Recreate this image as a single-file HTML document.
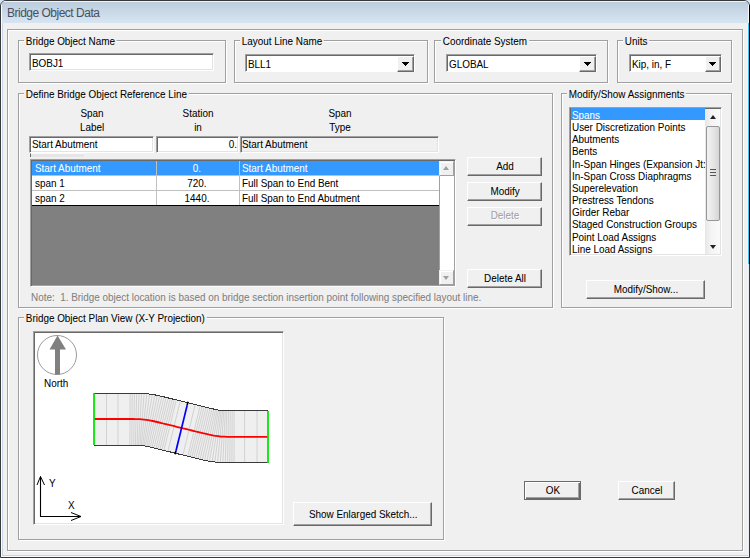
<!DOCTYPE html>
<html><head><meta charset="utf-8">
<style>
*{margin:0;padding:0;box-sizing:border-box}
html,body{width:750px;height:558px;overflow:hidden;background:#d6e6f3}
body{position:relative;font-family:"Liberation Sans",sans-serif;font-size:11px;color:#000}
div,span,svg{position:absolute}
.t{white-space:nowrap;line-height:13px;transform:scaleX(0.9);transform-origin:0 0;-webkit-text-stroke:0.05px currentColor}
.c{text-align:center;transform-origin:50% 0}
.r{text-align:right;transform-origin:100% 0}
.grp{border:1px solid #a0a0a0;box-shadow:inset 1px 1px 0 #fff,1px 1px 0 #fff}
.lbl{background:#f0f0f0;padding:0 2px 0 2px;white-space:nowrap;line-height:13px;transform:scaleX(0.9);transform-origin:0 0;-webkit-text-stroke:0.05px currentColor}
.edit{background:#fff;border:1px solid;border-color:#a0a0a0 #fff #fff #a0a0a0;box-shadow:inset 1px 1px 0 #696969,inset -1px -1px 0 #e3e3e3}
.combo{background:#fff;border:1px solid;border-color:#a0a0a0 #fff #fff #a0a0a0;box-shadow:inset 1px 1px 0 #696969}
.btn{background:#f0f0f0;border:1px solid;border-color:#fff #696969 #696969 #fff;box-shadow:inset -1px -1px 0 #a0a0a0}
.btnd{background:#f0f0f0;border:1px solid #696969;box-shadow:inset 1px 1px 0 #fff,inset -1px -1px 0 #696969,inset -2px -2px 0 #a0a0a0}
.dd{background:#f0f0f0;border:1px solid;border-color:#fff #696969 #696969 #fff;box-shadow:inset -1px -1px 0 #a0a0a0}
.arr{width:0;height:0;border-left:3.5px solid transparent;border-right:3.5px solid transparent;border-top:4px solid #000}
</style></head><body>
<div style="left:0;top:0;width:750px;height:558px;border:1px solid #383838;border-radius:6px 6px 0 0;background:#f0f0f0"></div>
<div style="left:1px;top:1px;width:748px;height:22px;border-radius:5px 5px 0 0;background:linear-gradient(#eef3f8 0,#eef3f8 1px,#bccddd 1px,#d7e5f2 100%)"></div>
<div style="left:1px;top:5px;width:1px;height:552px;background:#fff"></div>
<div style="left:2px;top:23px;width:1px;height:533px;background:#c4d6e8"></div>
<div style="left:748px;top:5px;width:1px;height:18px;background:#f4f8fc"></div>
<div style="left:748px;top:23px;width:1px;height:241px;background:#3cc4f0"></div>
<div style="left:748px;top:264px;width:1px;height:293px;background:#e4eef8"></div>
<div style="left:749px;top:5px;width:1px;height:259px;background:#000"></div>
<div style="left:747px;top:23px;width:1px;height:533px;background:#f6f0f0"></div>
<div style="left:2px;top:555px;width:746px;height:1px;background:#c4d6e8"></div>
<div style="left:2px;top:556px;width:746px;height:1px;background:#f8fbff"></div>
<span style="left:7px;top:6px;font-size:12px;line-height:15px;color:#4a4e5e;letter-spacing:-0.5px;white-space:nowrap">Bridge Object Data</span>
<div class="grp" style="left:7px;top:29px;width:736px;height:522px"></div>
<div class="grp" style="left:18px;top:40px;width:208px;height:43px"></div>
<span class="lbl" style="left:24px;top:35px">Bridge Object Name</span>
<div class="edit" style="left:29px;top:53px;width:185px;height:18px;background:#fff"></div>
<span class="t" style="left:32px;top:57px;">BOBJ1</span>
<div class="grp" style="left:234px;top:40px;width:194px;height:43px"></div>
<span class="lbl" style="left:240px;top:35px">Layout Line Name</span>
<div class="combo" style="left:245px;top:54px;width:170px;height:18px"></div>
<span class="t" style="left:248px;top:58px;">BLL1</span>
<div class="dd" style="left:397px;top:56px;width:17px;height:16px"></div>
<svg style="left:402px;top:62px" width="7" height="4" shape-rendering="crispEdges"><rect x="0" y="0" width="7" height="1"/><rect x="1" y="1" width="5" height="1"/><rect x="2" y="2" width="3" height="1"/><rect x="3" y="3" width="1" height="1"/></svg>
<div class="grp" style="left:434px;top:40px;width:174px;height:43px"></div>
<span class="lbl" style="left:441px;top:35px">Coordinate System</span>
<div class="combo" style="left:446px;top:54px;width:151px;height:18px"></div>
<span class="t" style="left:449px;top:58px;">GLOBAL</span>
<div class="dd" style="left:579px;top:56px;width:17px;height:16px"></div>
<svg style="left:584px;top:62px" width="7" height="4" shape-rendering="crispEdges"><rect x="0" y="0" width="7" height="1"/><rect x="1" y="1" width="5" height="1"/><rect x="2" y="2" width="3" height="1"/><rect x="3" y="3" width="1" height="1"/></svg>
<div class="grp" style="left:617px;top:40px;width:115px;height:43px"></div>
<span class="lbl" style="left:623px;top:35px">Units</span>
<div class="combo" style="left:629px;top:54px;width:93px;height:18px"></div>
<span class="t" style="left:632px;top:58px;">Kip, in, F</span>
<div class="dd" style="left:705px;top:56px;width:16px;height:16px"></div>
<svg style="left:709px;top:62px" width="7" height="4" shape-rendering="crispEdges"><rect x="0" y="0" width="7" height="1"/><rect x="1" y="1" width="5" height="1"/><rect x="2" y="2" width="3" height="1"/><rect x="3" y="3" width="1" height="1"/></svg>
<div class="grp" style="left:18px;top:93px;width:535px;height:215px"></div>
<span class="lbl" style="left:24px;top:88px">Define Bridge Object Reference Line</span>
<span class="t c" style="left:32.0px;top:107px;width:120px;">Span</span>
<span class="t c" style="left:32.0px;top:121px;width:120px;">Label</span>
<span class="t c" style="left:137.5px;top:107px;width:120px;">Station</span>
<span class="t c" style="left:137.5px;top:121px;width:120px;">in</span>
<span class="t c" style="left:280.0px;top:107px;width:120px;">Span</span>
<span class="t c" style="left:280.0px;top:121px;width:120px;">Type</span>
<div class="edit" style="left:29px;top:136px;width:125px;height:17px;background:#fff"></div>
<span class="t" style="left:32px;top:138px;">Start Abutment</span>
<div class="edit" style="left:156px;top:136px;width:83px;height:17px;background:#fff"></div>
<span class="t r" style="left:117px;top:138px;width:120px;">0.</span>
<div class="edit" style="left:240px;top:136px;width:199px;height:17px;background:#f0f0f0"></div>
<span class="t" style="left:242px;top:138px;">Start Abutment</span>
<div style="left:30px;top:159px;width:426px;height:128px;background:#808080;border:1px solid;border-color:#a0a0a0 #fff #fff #a0a0a0;box-shadow:inset 1px 1px 0 #696969,inset -1px -1px 0 #a0a0a0"></div>
<div style="left:30px;top:153px;width:54px;height:4px;background:#e6e6e6;border-top:1px solid #fafafa;border-left:1px solid #666"></div>
<div style="left:32px;top:161px;width:407px;height:44px;background:#fff"></div>
<div style="left:32px;top:161px;width:407px;height:14px;background:#3399ff"></div>
<div style="left:32px;top:175px;width:407px;height:1px;background:#c0c0c0"></div>
<div style="left:32px;top:190px;width:407px;height:1px;background:#c0c0c0"></div>
<div style="left:32px;top:205px;width:407px;height:1px;background:#000"></div>
<div style="left:156px;top:161px;width:1px;height:44px;background:#c0c0c0"></div>
<div style="left:239px;top:161px;width:1px;height:44px;background:#c0c0c0"></div>
<span class="t" style="left:35px;top:162px;color:#fff">Start Abutment</span>
<span class="t c" style="left:137.0px;top:162px;width:120px;color:#fff">0.</span>
<span class="t" style="left:242px;top:162px;color:#fff">Start Abutment</span>
<span class="t" style="left:35px;top:177px;">span 1</span>
<span class="t c" style="left:137.0px;top:177px;width:120px;">720.</span>
<span class="t" style="left:242px;top:177px;">Full Span to End Bent</span>
<span class="t" style="left:35px;top:192px;">span 2</span>
<span class="t c" style="left:137.0px;top:192px;width:120px;">1440.</span>
<span class="t" style="left:242px;top:192px;">Full Span to End Abutment</span>
<div style="left:439px;top:161px;width:15px;height:124px;background:#fff;border-left:1px solid #a0a0a0"></div>
<div class="dd" style="left:439px;top:161px;width:15px;height:15px;border-color:#f0f0f0 #a0a0a0 #a0a0a0 #f0f0f0;box-shadow:inset 1px 1px 0 #fff"></div>
<div class="arr" style="left:443px;top:166px;border-top:0;border-bottom:4px solid #a0a0a0"></div>
<div class="dd" style="left:439px;top:270px;width:15px;height:15px;border-color:#f0f0f0 #a0a0a0 #a0a0a0 #f0f0f0;box-shadow:inset 1px 1px 0 #fff"></div>
<div class="arr" style="left:443px;top:276px;border-top-color:#a0a0a0"></div>
<div class="btn" style="left:467px;top:157px;width:75px;height:19px"></div>
<span class="t c" style="left:444.5px;top:160px;width:120px;">Add</span>
<div class="btn" style="left:467px;top:182px;width:75px;height:19px"></div>
<span class="t c" style="left:444.5px;top:185px;width:120px;">Modify</span>
<div class="btn" style="left:467px;top:207px;width:75px;height:19px"></div>
<span class="t c" style="left:444.5px;top:209px;width:120px;color:#a0a0a0;text-shadow:1px 1px 0 #fff">Delete</span>
<div class="btn" style="left:467px;top:269px;width:75px;height:19px"></div>
<span class="t c" style="left:444.5px;top:272px;width:120px;">Delete All</span>
<span class="t" style="left:31px;top:291px;color:#808080">Note:&nbsp; 1. Bridge object location is based on bridge section insertion point following specified layout line.</span>
<div class="grp" style="left:561px;top:93px;width:171px;height:215px"></div>
<span class="lbl" style="left:567px;top:88px">Modify/Show Assignments</span>
<div class="edit" style="left:569px;top:107px;width:153px;height:149px;background:#fff"></div>
<div style="left:571px;top:108px;width:134px;height:12px;background:#3399ff"></div>
<span class="t" style="left:572px;top:109px;color:#fff">Spans</span>
<span class="t" style="left:572px;top:121px;">User Discretization Points</span>
<span class="t" style="left:572px;top:133px;">Abutments</span>
<span class="t" style="left:572px;top:145px;">Bents</span>
<span class="t" style="left:572px;top:158px;">In-Span Hinges (Expansion Jt:</span>
<span class="t" style="left:572px;top:170px;">In-Span Cross Diaphragms</span>
<span class="t" style="left:572px;top:182px;">Superelevation</span>
<span class="t" style="left:572px;top:194px;">Prestress Tendons</span>
<span class="t" style="left:572px;top:206px;">Girder Rebar</span>
<span class="t" style="left:572px;top:218px;">Staged Construction Groups</span>
<span class="t" style="left:572px;top:231px;">Point Load Assigns</span>
<span class="t" style="left:572px;top:243px;">Line Load Assigns</span>
<div style="left:705px;top:109px;width:15px;height:145px;background:linear-gradient(90deg,#e6e6e6,#f4f4f4 40%,#fafafa)"></div>
<div style="left:706px;top:126px;width:14px;height:95px;border:1px solid #979797;border-radius:2px;background:linear-gradient(90deg,#f2f2f2,#e6e6e6 50%,#d6d6d6)"></div>
<div style="left:710px;top:169px;width:6px;height:7px;border-top:1px solid #555;border-bottom:1px solid #555"></div>
<div style="left:710px;top:172px;width:6px;height:1px;background:#555"></div>
<div class="arr" style="left:709.5px;top:115px;border-top:0;border-bottom:4px solid #222"></div>
<div class="arr" style="left:709.5px;top:245px;border-top-color:#222"></div>
<div class="btn" style="left:586px;top:280px;width:119px;height:19px"></div>
<span class="t c" style="left:585.5px;top:283px;width:120px;">Modify/Show...</span>
<div class="grp" style="left:18px;top:317px;width:426px;height:223px"></div>
<span class="lbl" style="left:24px;top:312px">Bridge Object Plan View (X-Y Projection)</span>
<div class="edit" style="left:33px;top:331px;width:251px;height:194px;background:#fff"></div>
<svg style="left:0;top:0" width="750" height="558" viewBox="0 0 750 558">
<polygon points="94.0,393.0 96.2,393.0 98.4,393.0 100.5,393.0 102.7,393.0 104.9,393.0 107.1,393.0 109.2,393.0 111.4,393.0 113.6,393.0 115.8,393.0 117.9,393.0 120.1,393.0 122.3,393.0 124.5,393.0 126.7,393.0 128.9,393.0 131.1,393.0 133.5,393.0 135.9,393.1 138.4,393.1 141.1,393.3 144.0,393.4 146.9,393.7 149.8,394.1 152.7,394.5 155.5,395.0 158.2,395.6 160.7,396.1 163.1,396.7 165.4,397.2 167.6,397.8 169.8,398.3 172.0,398.9 174.2,399.4 176.4,399.9 178.5,400.5 180.7,401.0 182.9,401.5 185.1,402.1 187.2,402.6 189.4,403.1 191.6,403.7 193.8,404.2 195.9,404.7 198.1,405.3 200.3,405.8 202.5,406.3 204.6,406.9 206.8,407.4 208.9,407.9 211.0,408.4 213.0,408.9 214.9,409.3 216.7,409.7 218.3,410.0 219.8,410.2 221.2,410.4 222.6,410.6 224.1,410.7 225.7,410.8 227.4,410.8 229.3,410.9 231.3,410.9 233.4,410.9 235.5,410.9 237.6,410.9 239.8,410.9 242.0,410.9 244.2,410.9 246.3,410.9 248.5,410.9 250.7,410.9 252.9,410.9 255.0,410.9 257.2,410.9 259.4,410.9 261.6,410.9 263.7,410.9 265.9,410.9 268.0,410.9 268.0,462.9 265.8,462.9 263.6,462.9 261.5,462.9 259.3,462.9 257.1,462.9 254.9,462.9 252.8,462.9 250.6,462.9 248.4,462.9 246.2,462.9 244.1,462.9 241.9,462.9 239.7,462.9 237.5,462.9 235.3,462.9 233.1,462.9 230.8,462.9 228.4,462.9 226.0,462.8 223.4,462.7 220.6,462.6 217.7,462.3 214.8,462.0 211.8,461.6 209.0,461.1 206.3,460.6 203.7,460.1 201.2,459.5 198.9,459.0 196.6,458.4 194.4,457.9 192.2,457.3 190.0,456.8 187.8,456.3 185.6,455.7 183.5,455.2 181.3,454.7 179.1,454.1 176.9,453.6 174.8,453.1 172.6,452.5 170.4,452.0 168.2,451.5 166.1,450.9 163.9,450.4 161.7,449.9 159.5,449.3 157.4,448.8 155.2,448.3 153.1,447.8 151.1,447.3 149.1,446.8 147.3,446.4 145.6,446.1 144.0,445.8 142.6,445.6 141.2,445.4 139.7,445.3 138.2,445.2 136.5,445.1 134.7,445.1 132.8,445.0 130.8,445.0 128.7,445.0 126.5,445.0 124.4,445.0 122.2,445.0 120.0,445.0 117.8,445.0 115.7,445.0 113.5,445.0 111.3,445.0 109.1,445.0 107.0,445.0 104.8,445.0 102.6,445.0 100.4,445.0 98.3,445.0 96.1,445.0 94.0,445.0" fill="#efefef"/>
<line x1="106.5" y1="393.0" x2="106.5" y2="445.0" stroke="#d2d2d2" stroke-width="1"/>
<line x1="118.0" y1="393.0" x2="118.0" y2="445.0" stroke="#d2d2d2" stroke-width="1"/>
<line x1="130.1" y1="393.0" x2="129.9" y2="445.0" stroke="#d2d2d2" stroke-width="1"/>
<line x1="132.2" y1="393.0" x2="131.8" y2="445.0" stroke="#d2d2d2" stroke-width="1"/>
<line x1="134.4" y1="393.0" x2="133.7" y2="445.0" stroke="#d2d2d2" stroke-width="1"/>
<line x1="136.7" y1="393.1" x2="135.4" y2="445.1" stroke="#d2d2d2" stroke-width="1"/>
<line x1="139.1" y1="393.2" x2="137.0" y2="445.1" stroke="#d2d2d2" stroke-width="1"/>
<line x1="141.6" y1="393.3" x2="138.5" y2="445.2" stroke="#d2d2d2" stroke-width="1"/>
<line x1="144.2" y1="393.5" x2="139.9" y2="445.3" stroke="#d2d2d2" stroke-width="1"/>
<line x1="146.9" y1="393.7" x2="141.2" y2="445.4" stroke="#d2d2d2" stroke-width="1"/>
<line x1="149.6" y1="394.1" x2="142.5" y2="445.6" stroke="#d2d2d2" stroke-width="1"/>
<line x1="152.3" y1="394.5" x2="143.8" y2="445.8" stroke="#d2d2d2" stroke-width="1"/>
<line x1="154.9" y1="394.9" x2="145.3" y2="446.0" stroke="#d2d2d2" stroke-width="1"/>
<line x1="157.3" y1="395.4" x2="146.8" y2="446.3" stroke="#d2d2d2" stroke-width="1"/>
<line x1="159.7" y1="395.9" x2="148.4" y2="446.7" stroke="#d2d2d2" stroke-width="1"/>
<line x1="161.9" y1="396.4" x2="150.2" y2="447.1" stroke="#d2d2d2" stroke-width="1"/>
<line x1="164.1" y1="396.9" x2="152.0" y2="447.5" stroke="#d2d2d2" stroke-width="1"/>
<line x1="166.2" y1="397.4" x2="154.0" y2="448.0" stroke="#d2d2d2" stroke-width="1"/>
<line x1="168.2" y1="397.9" x2="155.9" y2="448.4" stroke="#d2d2d2" stroke-width="1"/>
<line x1="170.3" y1="398.4" x2="157.9" y2="448.9" stroke="#d2d2d2" stroke-width="1"/>
<line x1="172.3" y1="398.9" x2="159.9" y2="449.4" stroke="#d2d2d2" stroke-width="1"/>
<line x1="174.3" y1="399.4" x2="161.9" y2="449.9" stroke="#d2d2d2" stroke-width="1"/>
<line x1="176.3" y1="399.9" x2="163.9" y2="450.4" stroke="#d2d2d2" stroke-width="1"/>
<line x1="180.3" y1="400.9" x2="167.9" y2="451.4" stroke="#d2d2d2" stroke-width="1"/>
<line x1="195.2" y1="404.5" x2="182.9" y2="455.1" stroke="#d2d2d2" stroke-width="1"/>
<line x1="200.2" y1="405.8" x2="187.8" y2="456.3" stroke="#d2d2d2" stroke-width="1"/>
<line x1="202.2" y1="406.3" x2="189.8" y2="456.8" stroke="#d2d2d2" stroke-width="1"/>
<line x1="204.2" y1="406.7" x2="191.8" y2="457.3" stroke="#d2d2d2" stroke-width="1"/>
<line x1="206.2" y1="407.2" x2="193.8" y2="457.7" stroke="#d2d2d2" stroke-width="1"/>
<line x1="208.2" y1="407.7" x2="195.9" y2="458.2" stroke="#d2d2d2" stroke-width="1"/>
<line x1="210.1" y1="408.2" x2="198.0" y2="458.7" stroke="#d2d2d2" stroke-width="1"/>
<line x1="212.0" y1="408.6" x2="200.1" y2="459.2" stroke="#d2d2d2" stroke-width="1"/>
<line x1="213.8" y1="409.0" x2="202.3" y2="459.8" stroke="#d2d2d2" stroke-width="1"/>
<line x1="215.5" y1="409.4" x2="204.6" y2="460.3" stroke="#d2d2d2" stroke-width="1"/>
<line x1="217.1" y1="409.7" x2="207.0" y2="460.8" stroke="#d2d2d2" stroke-width="1"/>
<line x1="218.5" y1="410.0" x2="209.5" y2="461.2" stroke="#d2d2d2" stroke-width="1"/>
<line x1="219.9" y1="410.2" x2="212.2" y2="461.7" stroke="#d2d2d2" stroke-width="1"/>
<line x1="221.2" y1="410.4" x2="214.9" y2="462.0" stroke="#d2d2d2" stroke-width="1"/>
<line x1="222.5" y1="410.6" x2="217.6" y2="462.3" stroke="#d2d2d2" stroke-width="1"/>
<line x1="223.8" y1="410.7" x2="220.3" y2="462.5" stroke="#d2d2d2" stroke-width="1"/>
<line x1="225.3" y1="410.7" x2="222.8" y2="462.7" stroke="#d2d2d2" stroke-width="1"/>
<line x1="226.8" y1="410.8" x2="225.3" y2="462.8" stroke="#d2d2d2" stroke-width="1"/>
<line x1="228.5" y1="410.9" x2="227.6" y2="462.8" stroke="#d2d2d2" stroke-width="1"/>
<line x1="230.3" y1="410.9" x2="229.8" y2="462.9" stroke="#d2d2d2" stroke-width="1"/>
<line x1="232.2" y1="410.9" x2="231.9" y2="462.9" stroke="#d2d2d2" stroke-width="1"/>
<line x1="234.1" y1="410.9" x2="234.0" y2="462.9" stroke="#d2d2d2" stroke-width="1"/>
<line x1="244.6" y1="410.9" x2="244.6" y2="462.9" stroke="#d2d2d2" stroke-width="1"/>
<line x1="257.0" y1="410.9" x2="257.0" y2="462.9" stroke="#d2d2d2" stroke-width="1"/>
<polyline points="94.0,393.0 96.2,393.0 98.4,393.0 100.5,393.0 102.7,393.0 104.9,393.0 107.1,393.0 109.2,393.0 111.4,393.0 113.6,393.0 115.8,393.0 117.9,393.0 120.1,393.0 122.3,393.0 124.5,393.0 126.7,393.0 128.9,393.0 131.1,393.0 133.5,393.0 135.9,393.1 138.4,393.1 141.1,393.3 144.0,393.4 146.9,393.7 149.8,394.1 152.7,394.5 155.5,395.0 158.2,395.6 160.7,396.1 163.1,396.7 165.4,397.2 167.6,397.8 169.8,398.3 172.0,398.9 174.2,399.4 176.4,399.9 178.5,400.5 180.7,401.0 182.9,401.5 185.1,402.1 187.2,402.6 189.4,403.1 191.6,403.7 193.8,404.2 195.9,404.7 198.1,405.3 200.3,405.8 202.5,406.3 204.6,406.9 206.8,407.4 208.9,407.9 211.0,408.4 213.0,408.9 214.9,409.3 216.7,409.7 218.3,410.0 219.8,410.2 221.2,410.4 222.6,410.6 224.1,410.7 225.7,410.8 227.4,410.8 229.3,410.9 231.3,410.9 233.4,410.9 235.5,410.9 237.6,410.9 239.8,410.9 242.0,410.9 244.2,410.9 246.3,410.9 248.5,410.9 250.7,410.9 252.9,410.9 255.0,410.9 257.2,410.9 259.4,410.9 261.6,410.9 263.7,410.9 265.9,410.9 268.0,410.9" fill="none" stroke="#3a3a3a" stroke-width="1" shape-rendering="crispEdges"/>
<polyline points="94.0,445.0 96.2,445.0 98.4,445.0 100.5,445.0 102.7,445.0 104.9,445.0 107.1,445.0 109.2,445.0 111.4,445.0 113.6,445.0 115.8,445.0 117.9,445.0 120.1,445.0 122.3,445.0 124.5,445.0 126.6,445.0 128.8,445.0 130.9,445.0 132.9,445.0 134.8,445.1 136.6,445.1 138.3,445.2 139.8,445.3 141.2,445.4 142.6,445.6 144.1,445.8 145.6,446.1 147.3,446.4 149.2,446.8 151.2,447.3 153.2,447.8 155.3,448.3 157.5,448.8 159.6,449.4 161.8,449.9 164.0,450.4 166.1,451.0 168.3,451.5 170.5,452.0 172.7,452.6 174.9,453.1 177.0,453.6 179.2,454.2 181.4,454.7 183.6,455.2 185.7,455.8 187.9,456.3 190.1,456.8 192.3,457.4 194.5,457.9 196.7,458.4 199.0,459.0 201.3,459.5 203.8,460.1 206.4,460.6 209.1,461.2 212.0,461.6 214.9,462.0 217.8,462.3 220.7,462.6 223.5,462.7 226.1,462.8 228.5,462.9 230.9,462.9 233.2,462.9 235.4,462.9 237.6,462.9 239.8,462.9 242.0,462.9 244.2,462.9 246.3,462.9 248.5,462.9 250.7,462.9 252.9,462.9 255.0,462.9 257.2,462.9 259.4,462.9 261.6,462.9 263.7,462.9 265.9,462.9 268.0,462.9" fill="none" stroke="#3a3a3a" stroke-width="1" shape-rendering="crispEdges"/>
<polyline points="94.0,419.0 96.2,419.0 98.4,419.0 100.5,419.0 102.7,419.0 104.9,419.0 107.1,419.0 109.2,419.0 111.4,419.0 113.6,419.0 115.8,419.0 117.9,419.0 120.1,419.0 122.3,419.0 124.5,419.0 126.6,419.0 128.8,419.0 131.0,419.0 133.2,419.0 135.3,419.1 137.5,419.1 139.7,419.2 141.9,419.4 144.1,419.6 146.2,419.8 148.4,420.2 150.6,420.6 152.8,421.0 154.9,421.5 157.1,422.0 159.3,422.5 161.5,423.0 163.6,423.6 165.8,424.1 168.0,424.6 170.2,425.2 172.3,425.7 174.5,426.2 176.7,426.8 178.9,427.3 181.0,427.8 183.2,428.4 185.4,428.9 187.6,429.4 189.7,430.0 191.9,430.5 194.1,431.0 196.3,431.6 198.5,432.1 200.6,432.6 202.8,433.2 205.0,433.7 207.2,434.2 209.3,434.7 211.5,435.1 213.7,435.6 215.9,435.9 218.0,436.2 220.2,436.5 222.4,436.6 224.6,436.7 226.7,436.8 228.9,436.9 231.1,436.9 233.3,436.9 235.4,436.9 237.6,436.9 239.8,436.9 242.0,436.9 244.2,436.9 246.3,436.9 248.5,436.9 250.7,436.9 252.9,436.9 255.0,436.9 257.2,436.9 259.4,436.9 261.6,436.9 263.7,436.9 265.9,436.9 268.0,436.9" fill="none" stroke="#ff0000" stroke-width="1.8"/>
<line x1="94" y1="393.0" x2="94" y2="445.0" stroke="#00e800" stroke-width="1.8"/>
<line x1="268" y1="410.9" x2="268" y2="462.9" stroke="#00e800" stroke-width="1.8"/>
<line x1="188.0" y1="401.7" x2="187.2" y2="405.1" stroke="#000" stroke-width="1.6"/>
<line x1="175.1" y1="454.2" x2="176.0" y2="450.8" stroke="#000" stroke-width="1.6"/>
<line x1="187.2" y1="405.1" x2="176.0" y2="450.8" stroke="#0000ff" stroke-width="1.7"/>
<circle cx="57" cy="355" r="19.5" fill="none" stroke="#9a9a9a" stroke-width="1"/>
<polygon points="57.5,335.5 66,349.5 60,349.5 60,374.5 55,374.5 55,349.5 49.5,349.5" fill="#808080"/>
<polyline points="40.5,476.5 40.5,516.5 81,516.5" fill="none" stroke="#000" stroke-width="1.1"/>
<polyline points="37,485 40.5,476.5 44.5,485" fill="none" stroke="#000" stroke-width="1"/>
<polyline points="71,512.5 81,516.5 71,520.5" fill="none" stroke="#000" stroke-width="1"/>
</svg>
<span class="t" style="left:44px;top:377px;">North</span>
<span class="t" style="left:49px;top:477px;">Y</span>
<span class="t" style="left:68px;top:499px;">X</span>
<div class="btn" style="left:293px;top:502px;width:139px;height:24px"></div>
<span class="t c" style="left:302.5px;top:508px;width:120px;">Show Enlarged Sketch...</span>
<div class="btnd" style="left:524px;top:481px;width:57px;height:19px"></div>
<span class="t c" style="left:492.5px;top:484px;width:120px;">OK</span>
<div class="btn" style="left:618px;top:481px;width:57px;height:19px"></div>
<span class="t c" style="left:586.5px;top:484px;width:120px;">Cancel</span>
</body></html>
